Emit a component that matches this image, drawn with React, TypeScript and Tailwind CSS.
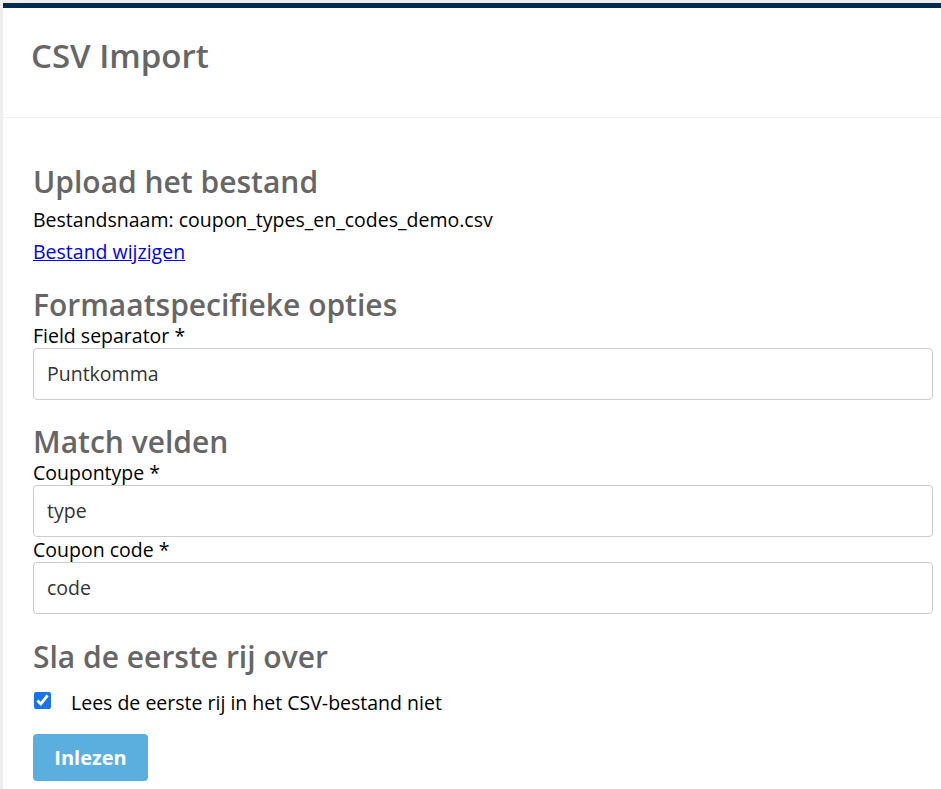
import { useState } from "react";

const font = { fontFamily: '"Open Sans", "Noto Sans", sans-serif' };

function Field({ label, value }: { label: string; value: string }) {
  return (
    <div>
      <label className="block text-[19.5px] leading-[24px] text-black">{label}</label>
      <div className="h-[52px] rounded-[4px] border border-[#cccccc] bg-white px-[13px] flex items-center text-[19.5px] text-[#333333]">
        {value}
      </div>
    </div>
  );
}

function Heading({ children, className = "" }: { children: string; className?: string }) {
  return (
    <h2 className={`text-[30px] leading-[30px] font-semibold text-[#666666] ${className}`}>{children}</h2>
  );
}

export default function App() {
  const [skip, setSkip] = useState(true);

  return (
    <div className="min-h-screen bg-[#eeeeee] pl-[3px] pt-[3px]" style={font}>
      <div className="min-h-[786px] bg-white border-t-[5px] border-[#032b4d]">
        <div className="px-[28px] pt-[29px] pb-[42px] border-b border-[#f0f0f0]">
          <h1 className="text-[33px] leading-[38px] font-semibold text-[#666666]">CSV Import</h1>
        </div>

        <div className="pl-[30px] pr-[8px] pt-[49px]">
          <Heading>Upload het bestand</Heading>
          <p className="mt-[9px] text-[19.5px] leading-[27px] text-black">
            Bestandsnaam: coupon_types_en_codes_demo.csv
          </p>
          <a href="#" className="mt-[5px] block w-fit text-[19.5px] leading-[27px] text-[#0000ee] underline">
            Bestand wijzigen
          </a>

          <Heading className="mt-[25px]">Formaatspecifieke opties</Heading>
          <div className="mt-[4px]">
            <Field label="Field separator *" value="Puntkomma" />
          </div>

          <Heading className="mt-[27px]">Match velden</Heading>
          <div className="mt-[4px] flex flex-col gap-[1px]">
            <Field label="Coupontype *" value="type" />
            <Field label="Coupon code *" value="code" />
          </div>

          <Heading className="mt-[28px]">Sla de eerste rij over</Heading>
          <label className="mt-[17px] flex items-center gap-[20px] text-[19.5px] leading-[27px] text-black">
            <input
              type="checkbox"
              checked={skip}
              onChange={(e) => setSkip(e.target.checked)}
              className="ml-[1px] mt-[-4px] h-[17px] w-[17px] accent-[#1a73e8]"
            />
            Lees de eerste rij in het CSV-bestand niet
          </label>

          <button className="mt-[18px] h-[47px] w-[115px] rounded-[4px] bg-[#5aafdf] text-white text-[20px] font-bold">
            Inlezen
          </button>
        </div>
      </div>
    </div>
  );
}
